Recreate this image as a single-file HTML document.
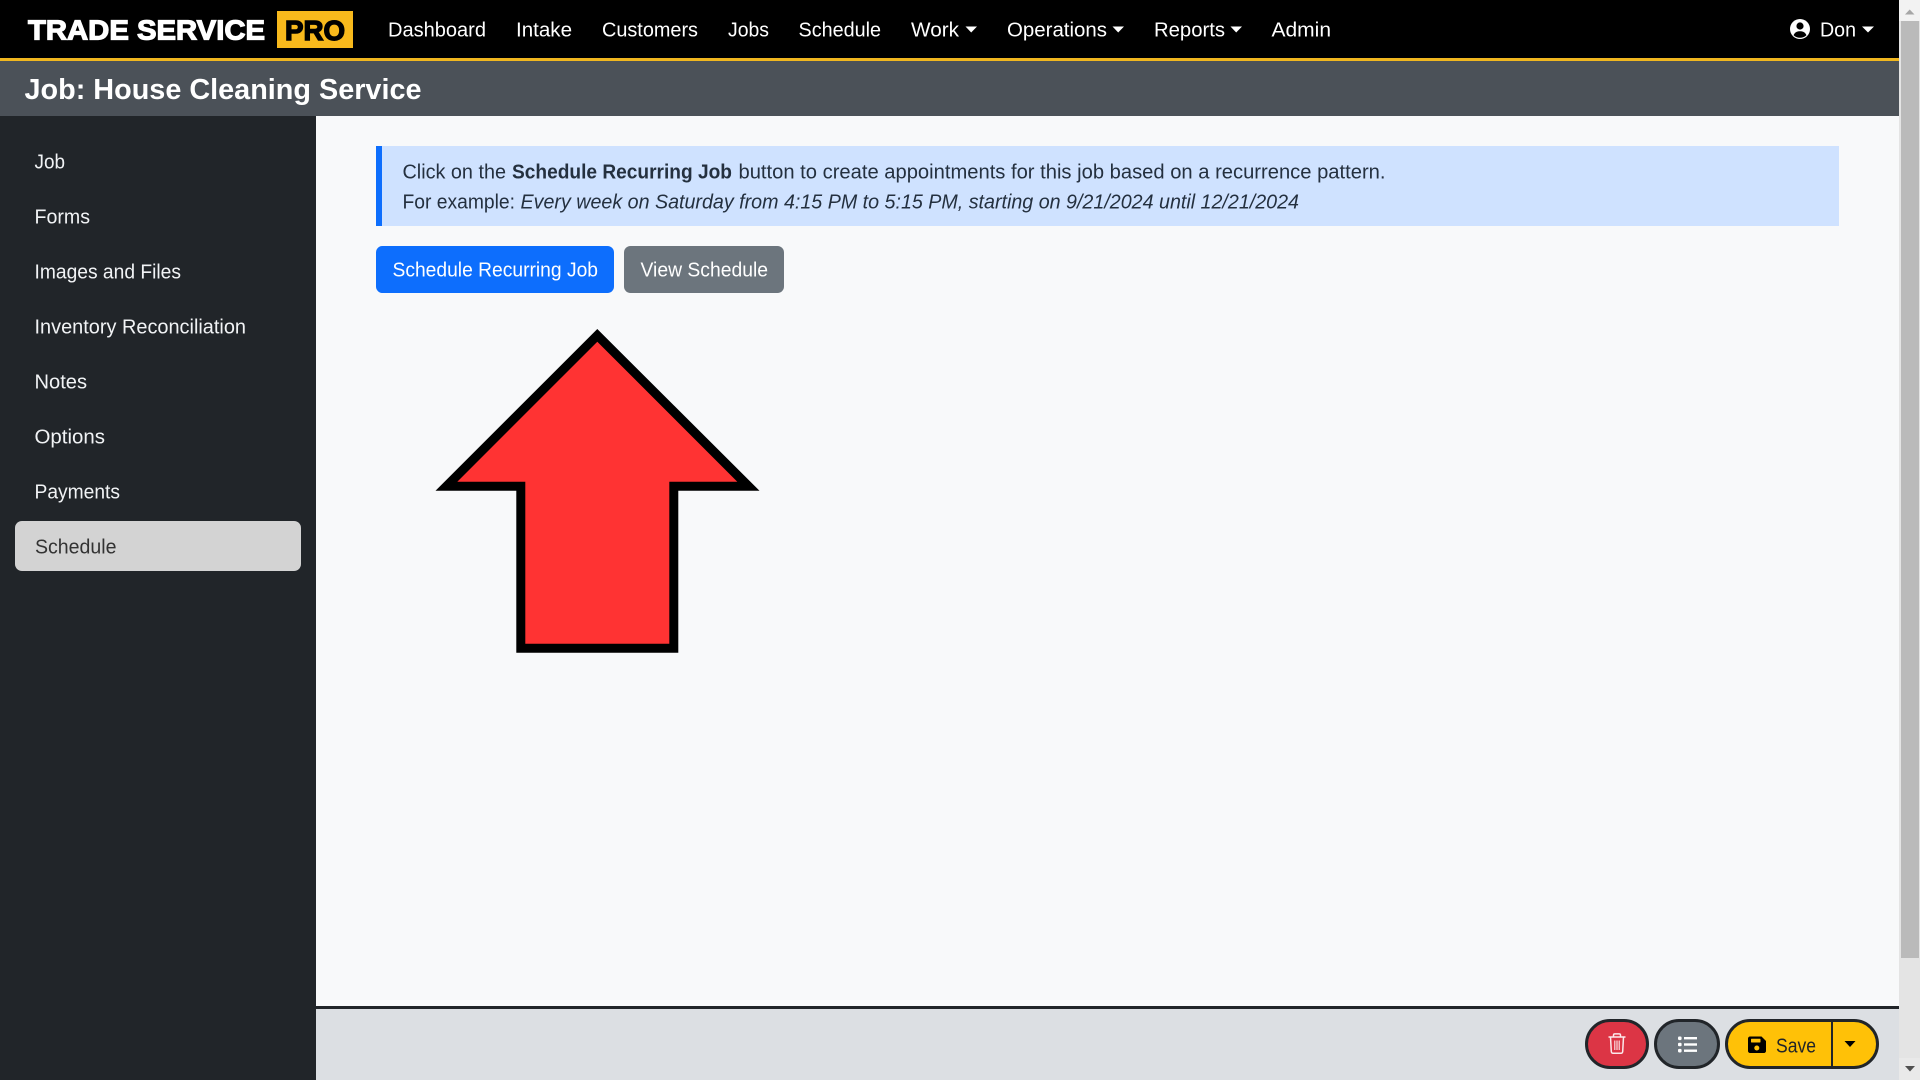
<!DOCTYPE html>
<html lang="en">
<head>
<meta charset="utf-8">
<title>Job: House Cleaning Service</title>
<style>
html,body{margin:0;padding:0;width:1920px;height:1080px;overflow:hidden;background:#f8f9fa}
svg{display:block;position:absolute;left:0;top:0}
text{font-family:"Liberation Sans",sans-serif;font-size:20px}
.n{fill:#fff}
.s{fill:#f1f3f5}
.a{fill:#24303f}
</style>
</head>
<body>
<svg width="1920" height="1080" viewBox="0 0 1920 1080" xmlns="http://www.w3.org/2000/svg">
<!-- backgrounds -->
<rect x="0" y="0" width="1920" height="1080" fill="#f8f9fa"/>
<rect x="0" y="0" width="1899" height="58" fill="#000"/>
<rect x="0" y="58" width="1899" height="3" fill="#f0b71f"/>
<rect x="0" y="61" width="1899" height="55" fill="#4b5158"/>
<rect x="0" y="116" width="316" height="964" fill="#212529"/>
<rect x="316" y="1006" width="1583" height="3" fill="#212529"/>
<rect x="316" y="1009" width="1583" height="71" fill="#dcdfe3"/>

<!-- logo -->
<text x="28" y="39.500" fill="#fff" stroke="#fff" stroke-width="1.200" textLength="237" lengthAdjust="spacingAndGlyphs" style="font-size:28px;font-weight:700">TRADE SERVICE</text>
<rect x="277" y="11" width="76" height="37" fill="#f8b91c"/>
<text x="285" y="40" fill="#000" stroke="#000" stroke-width="1.400" textLength="60" lengthAdjust="spacingAndGlyphs" style="font-size:28px;font-weight:700">PRO</text>

<!-- nav -->
<text class="n" x="388" y="36.500" textLength="98" lengthAdjust="spacingAndGlyphs">Dashboard</text>
<text class="n" x="516" y="36.500" textLength="56" lengthAdjust="spacingAndGlyphs">Intake</text>
<text class="n" x="602" y="36.500" textLength="96" lengthAdjust="spacingAndGlyphs">Customers</text>
<text class="n" x="728" y="36.500" textLength="41" lengthAdjust="spacingAndGlyphs">Jobs</text>
<text class="n" x="798.500" y="36.500" textLength="82.500" lengthAdjust="spacingAndGlyphs">Schedule</text>
<text class="n" x="911" y="36.500" textLength="48" lengthAdjust="spacingAndGlyphs">Work</text>
<polygon points="965.500,26.500 977,26.500 971.200,32.500" fill="#fff"/>
<text class="n" x="1007" y="36.500" textLength="100" lengthAdjust="spacingAndGlyphs">Operations</text>
<polygon points="1112.500,26.500 1124,26.500 1118.200,32.500" fill="#fff"/>
<text class="n" x="1154" y="36.500" textLength="71" lengthAdjust="spacingAndGlyphs">Reports</text>
<polygon points="1230.500,26.500 1242,26.500 1236.200,32.500" fill="#fff"/>
<text class="n" x="1271.500" y="36.500" textLength="59.500" lengthAdjust="spacingAndGlyphs">Admin</text>

<!-- user -->
<circle cx="1800" cy="29" r="10" fill="#fff"/>
<circle cx="1800" cy="26" r="3.600" fill="#000"/>
<path d="M1793.600 35.200c1-2.800 3.200-4 6.400-4s5.400 1.200 6.400 4c-1.600 1.600-3.900 2.500-6.400 2.500s-4.800-.9-6.400-2.500z" fill="#000"/>
<text class="n" x="1820" y="36.500" textLength="36" lengthAdjust="spacingAndGlyphs">Don</text>
<polygon points="1862,26.500 1874,26.500 1868,32.500" fill="#fff"/>

<!-- title -->
<text x="24.500" y="99" fill="#fff" textLength="397" lengthAdjust="spacingAndGlyphs" style="font-size:29px;font-weight:700">Job: House Cleaning Service</text>

<!-- sidebar -->
<text class="s" x="34.500" y="168.500" textLength="30.500" lengthAdjust="spacingAndGlyphs">Job</text>
<text class="s" x="34.500" y="223.500" textLength="55.500" lengthAdjust="spacingAndGlyphs">Forms</text>
<text class="s" x="34.500" y="278.500" textLength="146.500" lengthAdjust="spacingAndGlyphs">Images and Files</text>
<text class="s" x="34.500" y="333.500" textLength="211.500" lengthAdjust="spacingAndGlyphs">Inventory Reconciliation</text>
<text class="s" x="34.500" y="388.500" textLength="52.500" lengthAdjust="spacingAndGlyphs">Notes</text>
<text class="s" x="34.500" y="443.500" textLength="70.500" lengthAdjust="spacingAndGlyphs">Options</text>
<text class="s" x="34.500" y="498.500" textLength="85.500" lengthAdjust="spacingAndGlyphs">Payments</text>
<rect x="15" y="521" width="286" height="50" rx="7" fill="#d3d3d3"/>
<text x="35" y="553.500" fill="#333" textLength="81.500" lengthAdjust="spacingAndGlyphs">Schedule</text>

<!-- alert -->
<rect x="376" y="146" width="1463" height="80" fill="#cfe2ff"/>
<rect x="376" y="146" width="6" height="80" fill="#0d6efd"/>
<text class="a" x="402.500" y="178.500" textLength="103.500" lengthAdjust="spacingAndGlyphs">Click on the</text>
<text class="a" x="512" y="178.500" textLength="220" lengthAdjust="spacingAndGlyphs" style="font-weight:700">Schedule Recurring Job</text>
<text class="a" x="738.500" y="178.500" textLength="647" lengthAdjust="spacingAndGlyphs">button to create appointments for this job based on a recurrence pattern.</text>
<text class="a" x="402.500" y="208.500" textLength="112.500" lengthAdjust="spacingAndGlyphs">For example:</text>
<text class="a" x="520.500" y="208.500" textLength="778.500" lengthAdjust="spacingAndGlyphs" style="font-style:italic">Every week on Saturday from 4:15 PM to 5:15 PM, starting on 9/21/2024 until 12/21/2024</text>

<!-- buttons -->
<rect x="376" y="246" width="238" height="47" rx="6.500" fill="#0d6efd"/>
<text x="392.500" y="276.500" fill="#fff" textLength="205.500" lengthAdjust="spacingAndGlyphs">Schedule Recurring Job</text>
<rect x="624" y="246" width="160" height="47" rx="6.500" fill="#6c757d"/>
<text x="640.500" y="276.500" fill="#fff" textLength="127.500" lengthAdjust="spacingAndGlyphs">View Schedule</text>

<!-- arrow -->
<polygon points="597.300,329 759.500,490.800 678.300,490.800 678.300,652.700 516.300,652.700 516.300,490.800 435.500,490.800" fill="#000"/>
<polygon points="597.300,341.700 737.300,481.700 669.300,481.700 669.300,643.700 525.300,643.700 525.300,481.700 457.300,481.700" fill="#ff3333"/>

<!-- footer buttons -->
<rect x="1586.500" y="1020.500" width="61" height="47" rx="23.500" fill="#dc3545" stroke="#212529" stroke-width="3"/>
<g fill="none" stroke="#fbe9eb" stroke-width="1.500">
<path d="M1608.500 1037h17"/>
<path d="M1610.500 1037l.8 14.500c.1 1.200.8 1.800 1.800 1.800h7.800c1 0 1.700-.6 1.800-1.800l.8-14.500"/>
<path d="M1613.500 1037v-1.700c0-.8.600-1.400 1.400-1.400h4.200c.8 0 1.400.6 1.400 1.400v1.700"/>
<path d="M1614.800 1040.500v9.500M1617 1040.500v9.500M1619.200 1040.500v9.500" stroke-width="1.100"/>
</g>

<rect x="1655.500" y="1020.500" width="63" height="47" rx="23.500" fill="#6c757d" stroke="#212529" stroke-width="3"/>
<g fill="#fff">
<rect x="1678" y="1036.500" width="3.600" height="3.600" rx="1.200"/>
<rect x="1678" y="1042.700" width="3.600" height="3.600" rx="1.200"/>
<rect x="1678" y="1048.900" width="3.600" height="3.600" rx="1.200"/>
<rect x="1684" y="1037" width="13" height="2.400"/>
<rect x="1684" y="1043.300" width="13" height="2.400"/>
<rect x="1684" y="1049.500" width="13" height="2.400"/>
</g>

<rect x="1726.500" y="1020.500" width="151" height="47" rx="23.500" fill="#ffc107" stroke="#212529" stroke-width="3"/>
<rect x="1831" y="1021" width="2" height="46" fill="#212529"/>
<path d="M1750 1036.500h11.500l4.500 4.500v10c0 1.100-.9 2-2 2h-14c-1.100 0-2-.9-2-2v-12.500c0-1.100.9-2 2-2z" fill="#000"/>
<rect x="1751" y="1038.800" width="9.500" height="3.700" rx=".6" fill="#ffc107"/>
<circle cx="1756.800" cy="1048" r="2.500" fill="#ffc107"/>
<text x="1776" y="1052.500" fill="#212529" textLength="40" lengthAdjust="spacingAndGlyphs">Save</text>
<polygon points="1844.500,1041 1855.500,1041 1850,1047" fill="#000"/>

<!-- scrollbar -->
<rect x="1899" y="0" width="21" height="1080" fill="#e4e4e4"/>
<rect x="1899" y="0" width="21" height="21" fill="#f2f2f2"/>
<polygon points="1905,14.500 1914.500,14.500 1909.700,9.500" fill="#a6a6a6"/>
<rect x="1901" y="21" width="18" height="937" fill="#bababa"/>
<rect x="1899" y="1058" width="21" height="22" fill="#e9e9e9"/>
<polygon points="1905,1066 1915,1066 1910,1071.500" fill="#505050"/>
</svg>
</body>
</html>
